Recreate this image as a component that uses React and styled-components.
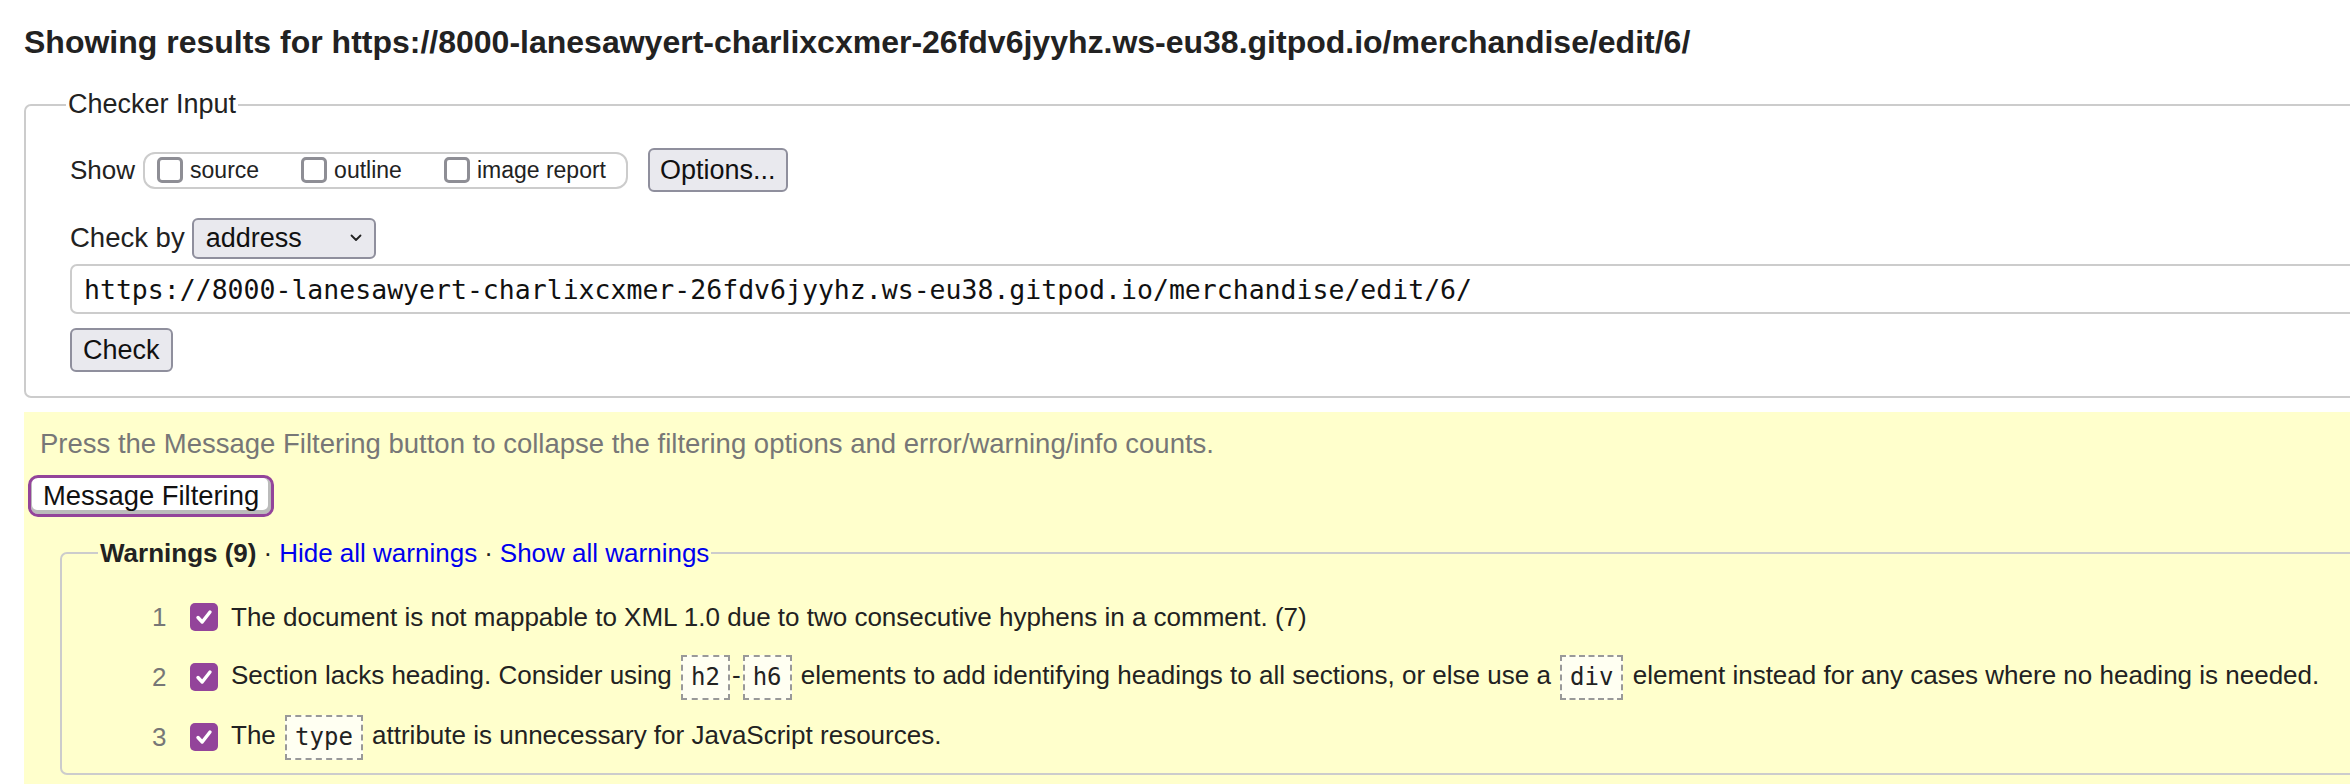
import React from 'react'
import { styled, createGlobalStyle } from 'styled-components'

const GlobalStyle = createGlobalStyle`
    html, body {
        margin: 0;
        padding: 0;
        background: #fff;
        overflow: hidden;
    }
    body {
        font-family: "Liberation Sans", Arial, Helvetica, sans-serif;
        color: #222;
    }
`

const Page = styled.div`
    width: 2500px;
    padding-left: 24px;
    box-sizing: border-box;
`
const Heading = styled.h2`
    margin: 23px 0 0;
    font-size: 32px;
    line-height: 38px;
    font-weight: bold;
    color: #222;
`
const Fieldset = styled.fieldset`
    margin: ${props => props.$top || 0}px 0 0 ${props => props.$left || 0}px;
    padding: ${props => props.$pad};
    border: 2px solid #ccc;
    border-radius: 7px;
    min-width: 0;
`
const Legend = styled.legend`
    padding: 0 2px;
    font-size: ${props => props.$size || 26}px;
    line-height: ${props => props.$lh || 30}px;
    font-weight: ${props => props.$bold ? 'bold' : 'normal'};
    color: #222;
`
const Inner = styled.div`
    padding: ${props => props.$pad};
`
const Row = styled.div`
    display: flex;
    align-items: center;
    height: ${props => props.$h}px;
    margin-top: ${props => props.$mt || 0}px;
`
const FieldLabel = styled.span`
    font-size: ${props => props.$size || 26}px;
`
const ToggleGroup = styled.div`
    display: flex;
    align-items: center;
    height: 33px;
    margin-left: 8px;
    padding: 0 20px 0 12px;
    border: 2px solid #ccc;
    border-radius: 12px;
    gap: 42px;
`
const ToggleLabel = styled.label`
    display: flex;
    align-items: center;
    gap: 7px;
    font-size: 23px;
`
const EmptyBox = styled.span`
    width: 20px;
    height: 20px;
    border: 3.5px solid #8e8e95;
    border-radius: 5px;
    background: #fff;
`
const MacButton = styled.button`
    font-family: inherit;
    font-size: 27px;
    color: #111;
    height: ${props => props.$h}px;
    padding: 0 ${props => props.$px}px;
    background: #e9e9ee;
    border: 2px solid #8f8f9d;
    border-radius: 6px;
    box-sizing: border-box;
    margin-left: ${props => props.$ml || 0}px;
`
const SelectBox = styled.div`
    display: flex;
    align-items: center;
    justify-content: space-between;
    box-sizing: border-box;
    width: 184px;
    height: 41px;
    margin-left: 7px;
    padding: 0 12px 0 12px;
    background: #e9e9ee;
    border: 2px solid #8f8f9d;
    border-radius: 6px;
    font-size: 27px;
    color: #111;
`
const UrlInput = styled.div`
    display: flex;
    align-items: center;
    box-sizing: border-box;
    height: 50px;
    margin-top: 5px;
    padding-left: 12px;
    border: 2px solid #ccc;
    border-radius: 7px;
    font-family: "DejaVu Sans Mono", Menlo, monospace;
    font-size: 26.5px;
    color: #111;
    white-space: nowrap;
`
const Notice = styled.section`
    margin-top: 14px;
    background: #ffc;
    padding: 17px 0 0 16px;
    height: 400px;
    box-sizing: border-box;
`
const Hint = styled.p`
    margin: 0;
    font-size: 27.5px;
    line-height: 30px;
    color: #777;
    white-space: nowrap;
`
const FilterButton = styled.button`
    display: block;
    font-family: inherit;
    font-size: 27.4px;
    color: #111;
    margin: 16px 0 0 -12px;
    height: 42px;
    padding: 0 12px;
    background: #fff;
    border: 3px solid #93449a;
    border-radius: 10px;
    box-shadow: inset -1px -2px 0 2px #bbb;
`
const Link = styled.a`
    color: #00e;
    text-decoration: none;
    font-weight: normal;
`
const Dot = styled.span`
    font-weight: normal;
    margin: 0 7px;
`
const List = styled.ol`
    list-style: none;
    margin: 0;
    padding: 0;
`
const Item = styled.li`
    display: flex;
    align-items: center;
    height: 60px;
    font-size: 26px;
    white-space: nowrap;
`
const Num = styled.span`
    width: 38px;
    color: #777;
    font-size: 26px;
`
const CheckedBox = styled.span`
    display: inline-flex;
    align-items: center;
    justify-content: center;
    flex: none;
    width: 28px;
    height: 28px;
    margin-right: 13px;
    border-radius: 5px;
    background: #93449a;
`
const Code = styled.code`
    display: inline-block;
    font-family: "DejaVu Sans Mono", Menlo, monospace;
    font-size: 24px;
    line-height: 41px;
    padding: 0 8px;
    margin: 0 2px;
    border: 2px dashed #999;
    background: #fffff2;
    color: #222;
    vertical-align: middle;
`

const Tick = () => (
    <svg width="20" height="18" viewBox="0 0 20 18">
        <path d="M4 9.5 L8.2 14 L16 4" fill="none" stroke="#fff" strokeWidth="3.4" strokeLinecap="round" strokeLinejoin="round" />
    </svg>
)

const Chevron = () => (
    <svg width="12" height="8" viewBox="0 0 12 8">
        <path d="M1.5 1.5 L6 6 L10.5 1.5" fill="none" stroke="#222" strokeWidth="1.8" strokeLinecap="round" strokeLinejoin="round" />
    </svg>
)

const warnings = [
    <>The document is not mappable to XML 1.0 due to two consecutive hyphens in a comment. (7)</>,
    <>Section lacks heading. Consider using <Code>h2</Code>-<Code>h6</Code> elements to add identifying headings to all sections, or else use a <Code>div</Code> element instead for any cases where no heading is needed.</>,
    <>The <Code>type</Code> attribute is unnecessary for JavaScript resources.</>,
]

const url = 'https://8000-lanesawyert-charlixcxmer-26fdv6jyyhz.ws-eu38.gitpod.io/merchandise/edit/6/'

const App = () => {
    return (
        <>
            <GlobalStyle />
            <Page>
                <Heading>Showing results for {url}</Heading>
                <Fieldset $top={28} $pad="0 0 24px 40px">
                    <Legend $size={27} $lh={31}>Checker Input</Legend>
                    <Inner $pad="0 0 0 4px">
                        <Row $h={44} $mt={28}>
                            <FieldLabel $size={26}>Show</FieldLabel>
                            <ToggleGroup>
                                <ToggleLabel><EmptyBox />source</ToggleLabel>
                                <ToggleLabel><EmptyBox />outline</ToggleLabel>
                                <ToggleLabel><EmptyBox />image report</ToggleLabel>
                            </ToggleGroup>
                            <MacButton $h={44} $px={10} $ml={20}>Options...</MacButton>
                        </Row>
                        <Row $h={42} $mt={25}>
                            <FieldLabel $size={27.5}>Check by</FieldLabel>
                            <SelectBox>address <Chevron /></SelectBox>
                        </Row>
                        <UrlInput>{url}</UrlInput>
                        <Row $h={44} $mt={14}>
                            <MacButton $h={44} $px={11}>Check</MacButton>
                        </Row>
                    </Inner>
                </Fieldset>
                <Notice>
                    <Hint>Press the Message Filtering button to collapse the filtering options and error/warning/info counts.</Hint>
                    <FilterButton>Message Filtering</FilterButton>
                    <Fieldset $top={21} $left={20} $pad="0 0 6px 36px">
                        <Legend $size={26} $lh={30} $bold>
                            Warnings (9)<Dot>·</Dot><Link href="#">Hide all warnings</Link><Dot>·</Dot><Link href="#">Show all warnings</Link>
                        </Legend>
                        <Inner $pad="19px 0 0 54px">
                            <List>
                                {warnings.map((w, i) => (
                                    <Item key={i}>
                                        <Num>{i + 1}</Num>
                                        <CheckedBox><Tick /></CheckedBox>
                                        <span>{w}</span>
                                    </Item>
                                ))}
                            </List>
                        </Inner>
                    </Fieldset>
                </Notice>
            </Page>
        </>
    )
}

export default App
